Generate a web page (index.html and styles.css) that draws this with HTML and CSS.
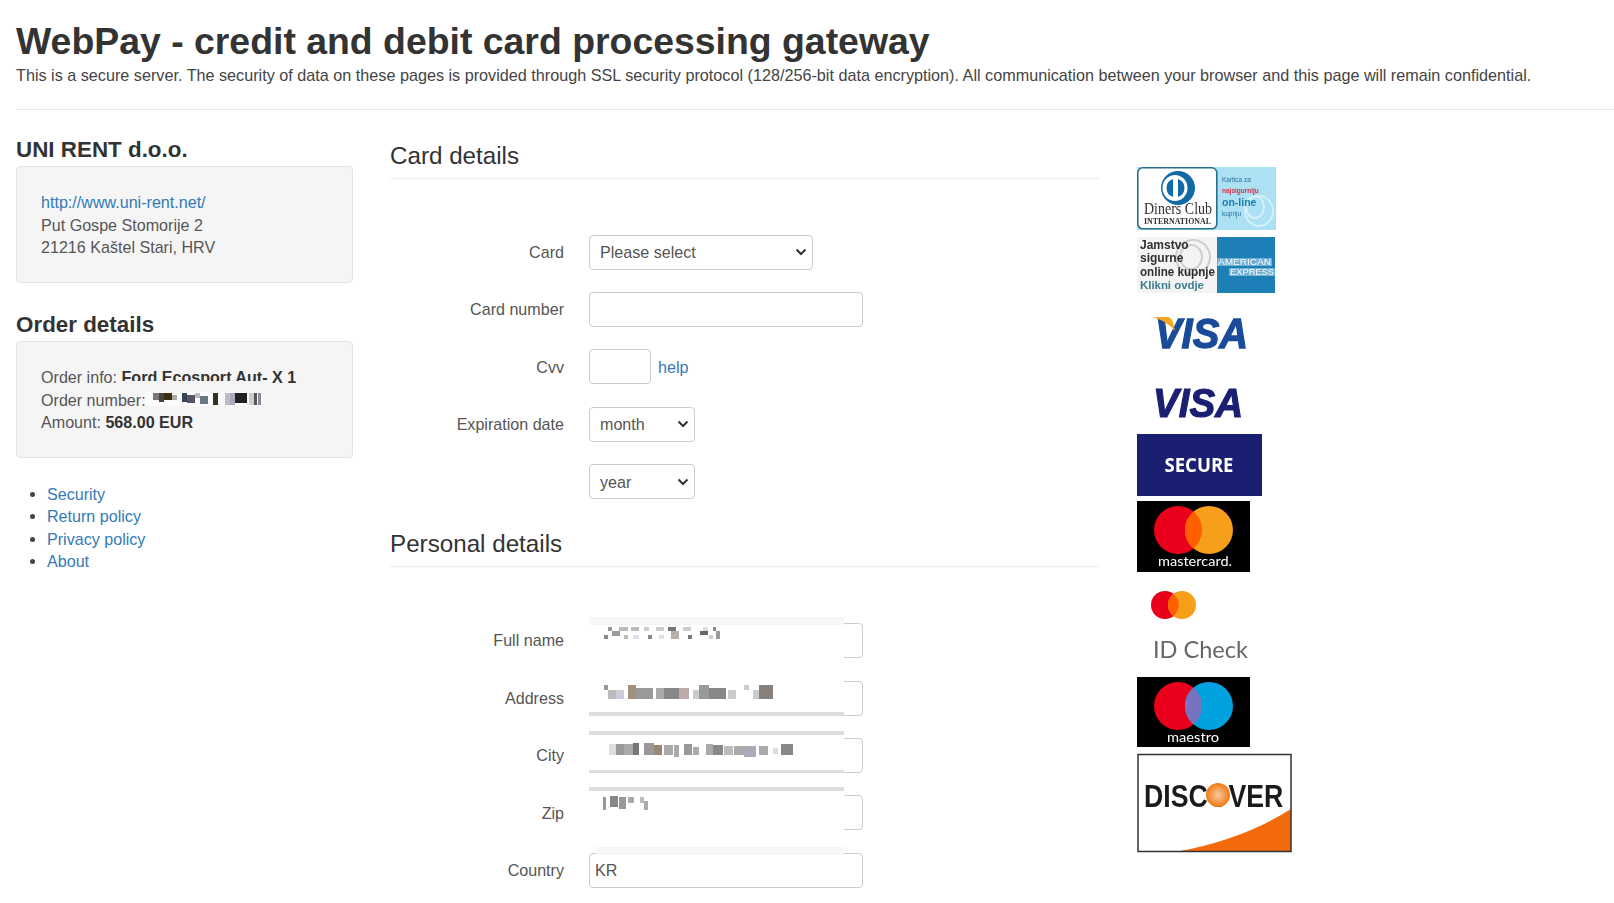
FILE: index.html
```html
<!DOCTYPE html>
<html lang="en">
<head>
    <meta charset="UTF-8">
    <meta name="viewport" content="width=device-width, initial-scale=1.0">
    <title>WebPay - credit and debit card processing gateway</title>
    <link rel="stylesheet" href="styles.css">
</head>
<body>
    <header class="page-header">
        <h1 class="page-title">WebPay - credit and debit card processing gateway</h1>
        <p class="page-intro">This is a secure server. The security of data on these pages is provided through SSL security protocol (128/256-bit data encryption). All communication between your browser and this page will remain confidential.</p>
    </header>

    <div class="layout">
        <!-- Merchant and order -->
        <aside class="sidebar">
            <h3 class="side-title">UNI RENT d.o.o.</h3>
            <div class="well">
                <a href="#">http://www.uni-rent.net/</a><br>
                Put Gospe Stomorije 2<br>
                21216 Kaštel Stari, HRV
            </div>

            <h3 class="side-title">Order details</h3>
            <div class="well well-order">
                Order info: <b class="order-info">Ford Ecosport Aut- X 1</b><br>
                Order number: <svg class="pixels pixels-order" width="118" height="14" viewBox="0 0 118 14"><rect x="0" y="0" width="118" height="14" fill="#fff" opacity=".6"/><rect x="8" y="1" width="6" height="7" fill="#777"/><rect x="14" y="1" width="5" height="9" fill="#444"/><rect x="19" y="1" width="8" height="7" fill="#3a2e10"/><rect x="27" y="3" width="5" height="5" fill="#aaa"/><rect x="37" y="1" width="5" height="9" fill="#345"/><rect x="42" y="3" width="8" height="8" fill="#556"/><rect x="50" y="1" width="5" height="5" fill="#bbb"/><rect x="55" y="4" width="8" height="8" fill="#678"/><rect x="68" y="1" width="5" height="12" fill="#332"/><rect x="80" y="1" width="5" height="12" fill="#bbc"/><rect x="85" y="1" width="5" height="12" fill="#aab"/><rect x="90" y="1" width="12" height="10" fill="#222"/><rect x="104" y="1" width="5" height="12" fill="#ccc"/><rect x="109" y="1" width="3" height="12" fill="#555"/><rect x="113" y="1" width="3" height="12" fill="#889"/></svg><br>
                Amount: <b>568.00 EUR</b>
            </div>

            <ul class="side-links">
                <li><a href="#">Security</a></li>
                <li><a href="#">Return policy</a></li>
                <li><a href="#">Privacy policy</a></li>
                <li><a href="#">About</a></li>
            </ul>
        </aside>

        <!-- Payment form -->
        <main class="pay-form">
            <h3 class="form-title">Card details</h3>
            <div class="form-row first-row">
                <label class="form-label">Card</label>
                <select class="control select-card"><option>Please select</option></select>
            </div>
            <div class="form-row">
                <label class="form-label">Card number</label>
                <input class="control input-wide" type="text">
            </div>
            <div class="form-row">
                <label class="form-label">Cvv</label>
                <input class="control input-cvv" type="text">
                <a class="help-link" href="#">help</a>
            </div>
            <div class="form-row">
                <label class="form-label">Expiration date</label>
                <select class="control select-date"><option>month</option></select>
            </div>
            <div class="form-row">
                <label class="form-label"></label>
                <select class="control select-date"><option>year</option></select>
            </div>

            <h3 class="form-title title-personal">Personal details</h3>
            <div class="form-row first-row">
                <label class="form-label">Full name</label>
                <div class="field">
                    <input class="control input-wide" type="text">
                    <div class="mask mask-name">
                        <svg class="pixels" width="248" height="20" viewBox="0 0 248 20"><rect x="12" y="1" width="4" height="4" fill="#999"/><rect x="23" y="1" width="9" height="4" fill="#bbb"/><rect x="35" y="1" width="8" height="4" fill="#bbb"/><rect x="48" y="1" width="5" height="4" fill="#ccc"/><rect x="60" y="1" width="8" height="4" fill="#ccc"/><rect x="72" y="1" width="8" height="4" fill="#777"/><rect x="87" y="1" width="8" height="4" fill="#ccc"/><rect x="107" y="1" width="5" height="4" fill="#ddd"/><rect x="117" y="1" width="3" height="4" fill="#888"/><rect x="8" y="9" width="4" height="4" fill="#888"/><rect x="16" y="5" width="8" height="5" fill="#999"/><rect x="28" y="9" width="4" height="4" fill="#bbb"/><rect x="37" y="9" width="6" height="4" fill="#dde"/><rect x="52" y="9" width="4" height="4" fill="#888"/><rect x="63" y="9" width="5" height="4" fill="#dde"/><rect x="75" y="5" width="8" height="8" fill="#b8b0a8"/><rect x="92" y="9" width="4" height="4" fill="#777"/><rect x="104" y="5" width="8" height="4" fill="#666"/><rect x="113" y="9" width="4" height="4" fill="#ccd"/><rect x="120" y="5" width="4" height="8" fill="#999"/></svg>
                    </div>
                </div>
            </div>
            <div class="form-row">
                <label class="form-label">Address</label>
                <div class="field">
                    <input class="control input-wide" type="text">
                    <div class="mask mask-address">
                        <svg class="pixels" width="248" height="20" viewBox="0 0 248 20"><rect x="8" y="2" width="4" height="5" fill="#999"/><rect x="12" y="7" width="8" height="9" fill="#bbb"/><rect x="20" y="7" width="8" height="9" fill="#ccd"/><rect x="32" y="2" width="8" height="14" fill="#a09080"/><rect x="40" y="5" width="17" height="11" fill="#999"/><rect x="60" y="5" width="8" height="11" fill="#aaa"/><rect x="68" y="5" width="15" height="11" fill="#888"/><rect x="83" y="5" width="10" height="11" fill="#baa"/><rect x="97" y="7" width="6" height="9" fill="#ccc"/><rect x="103" y="2" width="10" height="14" fill="#999"/><rect x="113" y="5" width="17" height="11" fill="#888"/><rect x="132" y="7" width="8" height="9" fill="#ccc"/><rect x="148" y="2" width="5" height="5" fill="#ccc"/><rect x="157" y="7" width="6" height="9" fill="#ccc"/><rect x="163" y="2" width="14" height="14" fill="#8a807a"/></svg>
                    </div>
                </div>
            </div>
            <div class="form-row">
                <label class="form-label">City</label>
                <div class="field">
                    <input class="control input-wide" type="text">
                    <div class="mask mask-city">
                        <svg class="pixels" width="248" height="24" viewBox="0 0 248 24"><rect x="13" y="9" width="7" height="11" fill="#ddd"/><rect x="20" y="9" width="8" height="11" fill="#999"/><rect x="28" y="9" width="9" height="11" fill="#aaa"/><rect x="37" y="8" width="6" height="12" fill="#777"/><rect x="48" y="8" width="10" height="12" fill="#999"/><rect x="58" y="10" width="8" height="10" fill="#987"/><rect x="68" y="10" width="9" height="10" fill="#aaa"/><rect x="78" y="10" width="5" height="12" fill="#aaa"/><rect x="88" y="9" width="8" height="11" fill="#999"/><rect x="97" y="12" width="6" height="8" fill="#aaa"/><rect x="110" y="9" width="7" height="11" fill="#aaa"/><rect x="117" y="10" width="10" height="10" fill="#888"/><rect x="128" y="11" width="9" height="9" fill="#bbb"/><rect x="138" y="11" width="10" height="9" fill="#aaa"/><rect x="148" y="11" width="12" height="11" fill="#aab"/><rect x="163" y="11" width="9" height="9" fill="#aaa"/><rect x="177" y="13" width="5" height="6" fill="#ddd"/><rect x="185" y="9" width="12" height="11" fill="#888"/></svg>
                    </div>
                </div>
            </div>
            <div class="form-row">
                <label class="form-label">Zip</label>
                <div class="field">
                    <input class="control input-wide" type="text">
                    <div class="mask mask-zip">
                        <svg class="pixels" width="248" height="24" viewBox="0 0 248 24"><rect x="7" y="6" width="3" height="13" fill="#999"/><rect x="14" y="5" width="8" height="11" fill="#888"/><rect x="23" y="6" width="7" height="12" fill="#999"/><rect x="32" y="6" width="6" height="6" fill="#aaa"/><rect x="44" y="6" width="4" height="6" fill="#bbb"/><rect x="48" y="10" width="4" height="9" fill="#aaa"/></svg>
                    </div>
                </div>
            </div>
            <div class="form-row last-row">
                <label class="form-label">Country</label>
                <div class="field">
                    <input class="control input-wide" type="text" value="KR">
                    <div class="mask mask-country"></div>
                </div>
            </div>
        </main>

        <!-- Card logos -->
        <div class="logos">
            <svg class="logo" width="140" height="65" viewBox="0 0 140 65">
                <rect x="0" y="0" width="139" height="63" fill="#abe1f3"/>
                <g fill="none" stroke="#d4f1fa" stroke-width="2"><ellipse cx="122" cy="44" rx="14" ry="15"/><ellipse cx="118" cy="40" rx="9" ry="11"/></g>
                <rect x=".8" y=".8" width="79" height="61" rx="5" fill="#fff" stroke="#26708f" stroke-width="1.6"/>
                <circle cx="41" cy="21" r="17" fill="#0f6aa6"/>
                <ellipse cx="38" cy="21" rx="12.5" ry="13" fill="#fff"/>
                <path d="M36 12a9.500 9.500 0 0 0 0 18Z" fill="#0f6aa6"/>
                <path d="M41 12a9.500 9.500 0 0 1 0 18Z" fill="#0f6aa6"/>
                <text class="t-serif" transform="translate(7 47) scale(1 1.2)" font-size="14" fill="#333">Diners Club</text>
                <text class="t-serif" x="7" y="57" font-size="7.9" font-weight="bold" fill="#333">INTERNATIONAL</text>
                <text x="85" y="15" font-size="6.500" fill="#2a6f9a">Kartica za</text>
                <text x="85" y="26" font-size="6.500" font-weight="bold" fill="#d8304a">najsigurniju</text>
                <text x="85" y="39" font-size="10.500" font-weight="bold" fill="#1c7fae">on-line</text>
                <text x="85" y="49" font-size="6.500" fill="#2a6f9a">kupnju</text>
            </svg>
            <svg class="logo" width="140" height="56" viewBox="0 0 140 56">
                <rect x="0" y="0" width="80" height="56" fill="#f4f4f4"/>
                <g fill="none" stroke="#cfcfcf" stroke-width="2"><ellipse cx="56" cy="20" rx="17" ry="17"/><ellipse cx="54" cy="20" rx="11" ry="12"/></g>
                <rect x="80" y="0" width="58" height="56" fill="#1e7fb6"/>
                <rect x="80" y="21" width="55" height="8" fill="#6fb0d4"/>
                <rect x="92" y="31" width="46" height="8" fill="#6fb0d4"/>
                <g class="t-bold" font-size="12" fill="#2f2f2f">
                    <text x="3" y="12">Jamstvo</text>
                    <text x="3" y="25">sigurne</text>
                    <text x="3" y="39" textLength="75" lengthAdjust="spacingAndGlyphs">online kupnje</text>
                </g>
                <text class="t-bold" x="3" y="52" font-size="11.500" fill="#3b7f8f" textLength="64">Klikni ovdje</text>
                <text x="81" y="28" font-size="8.500" fill="#fff" textLength="53" lengthAdjust="spacingAndGlyphs">AMERICAN</text>
                <text x="93" y="38" font-size="8.500" fill="#fff" textLength="44" lengthAdjust="spacingAndGlyphs">EXPRESS</text>
            </svg>
            <svg class="logo" width="140" height="68" viewBox="0 0 140 68">
                <text class="t-visa" x="18" y="50" font-size="43" fill="#1a4b9b" stroke="#1a4b9b" stroke-width="1.300" textLength="93" lengthAdjust="spacingAndGlyphs">VISA</text>
                <path d="M16 19 L31 19 Q35 20 36 25 L38 33 Q31 24 16 19Z" fill="#f3a81f"/>
            </svg>
            <svg class="logo" width="140" height="58" viewBox="0 0 140 58">
                <text class="t-visa" x="16" y="46" font-size="40" fill="#1a1f71" stroke="#1a1f71" stroke-width="1.200" textLength="90" lengthAdjust="spacingAndGlyphs">VISA</text>
            </svg>
            <svg class="logo" width="125" height="62" viewBox="0 0 125 62">
                <rect width="125" height="62" fill="#1a1f71"/>
                <text class="t-open" x="62" y="38" font-size="20" font-weight="700" fill="#fff" text-anchor="middle" textLength="69" lengthAdjust="spacingAndGlyphs">SECURE</text>
            </svg>
            <svg class="logo" width="113" height="71" viewBox="0 0 113 71">
                <rect width="113" height="71" fill="#000"/>
                <circle cx="41" cy="29" r="24" fill="#eb001b"/>
                <circle cx="72" cy="29" r="24" fill="#f79e1b"/>
                <path d="M56.500 10.600a24 24 0 0 1 0 36.800a24 24 0 0 1 0-36.800Z" fill="#ff5f00"/>
                <text class="t-lato" x="58" y="65" font-size="13" fill="#fff" text-anchor="middle" textLength="74" lengthAdjust="spacingAndGlyphs">mastercard.</text>
            </svg>
            <svg class="logo" width="120" height="95" viewBox="0 0 120 95">
                <circle cx="28" cy="28" r="14" fill="#eb001b"/>
                <circle cx="45" cy="28" r="14" fill="#f79e1b"/>
                <path d="M36.500 17a14 14 0 0 1 0 22a14 14 0 0 1 0-22Z" fill="#ff5f00"/>
                <text class="t-lato" x="16" y="81" font-size="24" fill="#666" textLength="95" lengthAdjust="spacingAndGlyphs">ID Check</text>
            </svg>
            <svg class="logo" width="113" height="70" viewBox="0 0 113 70">
                <rect width="113" height="70" fill="#000"/>
                <circle cx="41" cy="29" r="24" fill="#eb001b"/>
                <circle cx="72" cy="29" r="24" fill="#00a1df"/>
                <path d="M56.500 10.600a24 24 0 0 1 0 36.800a24 24 0 0 1 0-36.800Z" fill="#7673c0"/>
                <text class="t-lato" x="56" y="65" font-size="13" fill="#fff" text-anchor="middle" textLength="52" lengthAdjust="spacingAndGlyphs">maestro</text>
            </svg>
            <svg class="logo" width="156" height="101" viewBox="0 0 156 101">
                <defs><radialGradient id="disc-o"><stop offset="0" stop-color="#f9c9a0"/><stop offset="1" stop-color="#f27a14"/></radialGradient></defs>
                <rect x="1" y="2.500" width="153" height="97" fill="#fff"/>
                <path d="M38 100 Q105 88 154 57 L154 100Z" fill="#f26a0a"/>
                <rect x="1" y="2.500" width="153" height="97" fill="none" stroke="#333" stroke-width="1.500"/>
                <text class="t-bold" transform="translate(7 55) scale(1 1.180)" font-size="26.700" fill="#1a1a1a">DISCOVER</text>
                <circle cx="81" cy="43" r="12" fill="url(#disc-o)"/>
            </svg>
        </div>
    </div>
</body>
</html>
```

FILE: styles.css
```css
body {
    font-family: "Liberation Sans", Arial, sans-serif;
    font-size: 16.1px;
    line-height: 22.6px;
    color: #444;
    margin: 0;
    background-color: #fff;
    overflow: hidden;
}

a {
    color: #337ab7;
    text-decoration: none;
}

/* Header */
.page-header {
    margin-left: 16px;
    padding: 19px 0 22px;
    border-bottom: 1px solid #e8e8e8;
}

.page-title {
    font-size: 37.4px;
    line-height: 45px;
    font-weight: bold;
    color: #333;
    margin: 0;
}

.page-intro {
    font-size: 16.2px;
    margin: 0;
}

/* Columns */
.layout {
    display: flex;
    margin-left: 16px;
    padding-top: 23px;
}

.sidebar {
    width: 337px;
    margin-right: 37px;
    flex: none;
}

.side-title {
    font-size: 22.4px;
    line-height: 26px;
    font-weight: bold;
    color: #333;
    margin: 4px 0 3.5px;
}

.well {
    color: #555;
    background-color: #f5f5f5;
    border: 1px solid #e3e3e3;
    border-radius: 4px;
    padding: 24px;
    height: 67px;
    margin-bottom: 28.5px;
}

.well-order {
    margin-bottom: 24.5px;
}

.well b {
    color: #333;
}

/* The order number patch clips the line above it */
.order-info {
    position: relative;
}

.order-info::after {
    content: "";
    position: absolute;
    left: 0;
    bottom: 0;
    width: 148px;
    height: 5px;
    background-color: #f5f5f5;
}

.pixels {
    display: block;
    filter: blur(0.5px);
}

.pixels-order {
    display: inline-block;
    vertical-align: 0;
    margin-left: -5px;
}

.side-links {
    margin: 0;
    padding-left: 31px;
}

/* Form */
.pay-form {
    width: 710px;
    margin-right: 37px;
    flex: none;
}

.form-title {
    font-size: 24.2px;
    line-height: 30px;
    font-weight: normal;
    color: #333;
    margin: 8px 0 0;
    padding-bottom: 7px;
    border-bottom: 1px solid #eee;
}

.title-personal {
    margin-top: 30px;
}

.form-row {
    display: flex;
    align-items: center;
    height: 35px;
    margin-bottom: 22.4px;
}

.first-row {
    margin-top: 56px;
}

.last-row {
    margin-bottom: 0;
}

.form-label {
    width: 174px;
    margin-right: 25px;
    text-align: right;
    color: #555;
    flex: none;
}

.control {
    display: block;
    box-sizing: border-box;
    height: 35px;
    font-family: inherit;
    font-size: 16.1px;
    color: #555;
    background-color: #fff;
    border: 1px solid #ccc;
    border-radius: 4px;
    padding: 6px 5px;
    margin: 0;
}

select.control {
    appearance: none;
    padding: 6px 20px 6px 10px;
    background-image: url("data:image/svg+xml,%3Csvg xmlns='http://www.w3.org/2000/svg' width='12' height='8' viewBox='0 0 12 8'%3E%3Cpath d='M1.5 1.5 6 6l4.500-4.500' fill='none' stroke='%23333' stroke-width='2'/%3E%3C/svg%3E");
    background-repeat: no-repeat;
    background-position: right 5px center;
}

.select-card { width: 224px; }
.select-date { width: 106px; }
.input-wide { width: 274px; }
.input-cvv { width: 62px; }

.help-link {
    margin-left: 7px;
}

/* Pixelated patches that lie over the personal data */
.field {
    position: relative;
}

.mask {
    position: absolute;
    left: 0;
    width: 255px;
    background-color: #fff;
    box-sizing: border-box;
}

.mask .pixels {
    margin-left: 7px;
}

.mask-name {
    top: -6px;
    height: 41px;
    border-top: 8px solid #f6f6f6;
}

.mask-name .pixels {
    margin-top: 1px;
}

.mask-address {
    top: -6px;
    height: 41px;
    border-bottom: 4px solid #ddd;
}

.mask-address .pixels {
    margin-top: 8px;
}

.mask-city {
    top: -7px;
    height: 42px;
    border-top: 4px solid #ddd;
    border-bottom: 3px solid #ddd;
}

.mask-zip {
    top: -8px;
    height: 43px;
    border-top: 4px solid #ddd;
}

.mask-country {
    top: -6px;
    left: 7px;
    width: 248px;
    height: 8px;
    background-color: #f6f6f6;
}

/* Logos */
.logos {
    display: flex;
    flex-direction: column;
    gap: 5px;
    margin-top: 34px;
}

.logo {
    display: block;
    font-family: "Liberation Sans", Arial, sans-serif;
    filter: blur(0.4px);
}

.t-serif { font-family: "Liberation Serif", serif; }
.t-bold { font-family: "Liberation Sans", sans-serif; font-weight: bold; }
.t-visa { font-family: "Liberation Sans", sans-serif; font-weight: bold; font-style: italic; }
.t-open { font-family: "Open Sans", sans-serif; }
.t-lato { font-family: Lato, sans-serif; }
```
